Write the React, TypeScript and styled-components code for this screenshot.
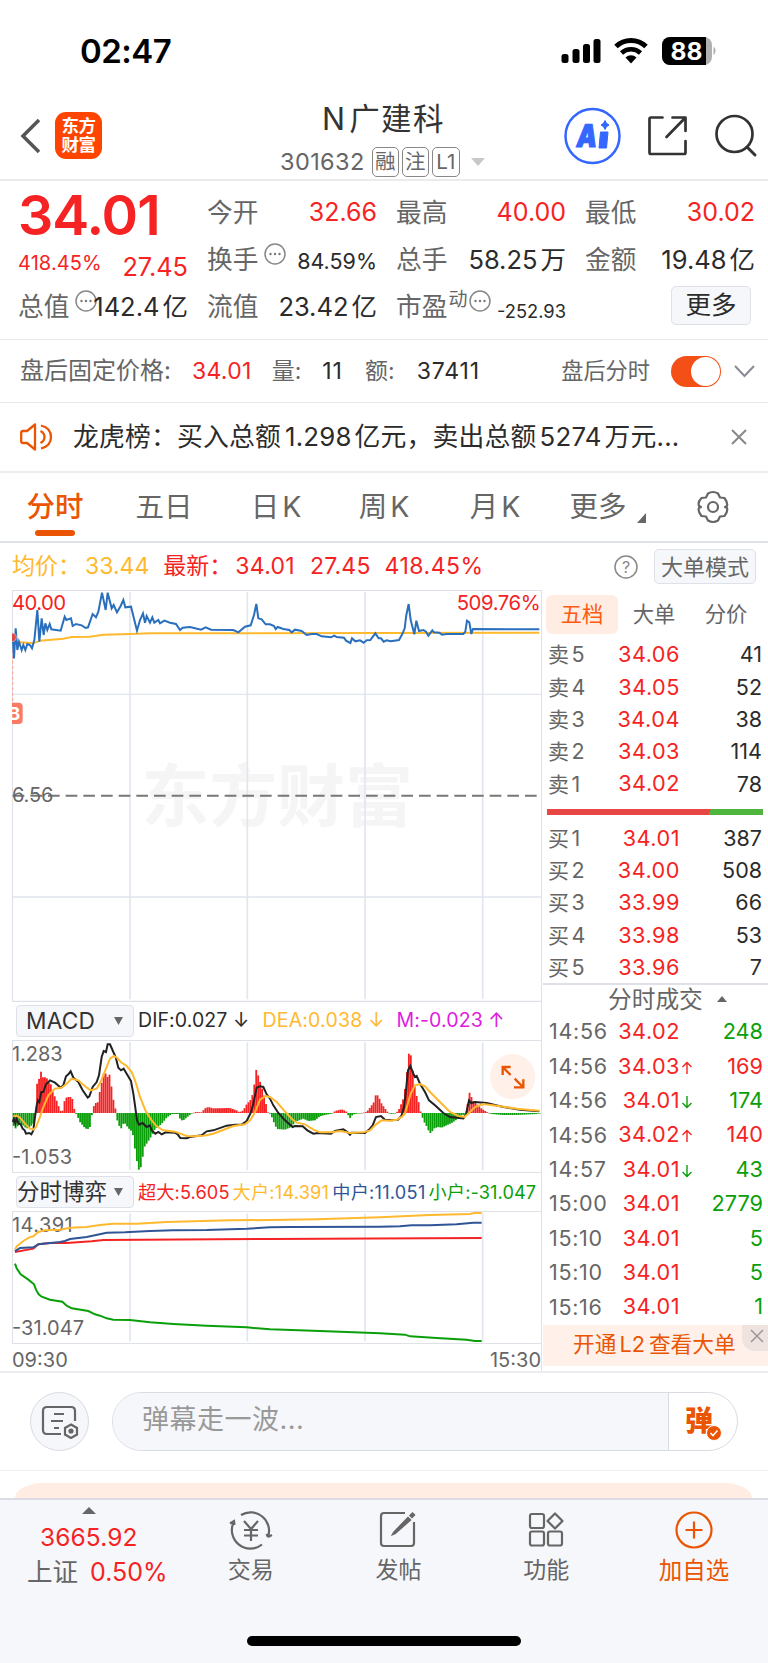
import React from "react";
import styled, { createGlobalStyle } from "styled-components";

const RED = "#f52323";
const GREEN = "#0a9f0a";
const GREY = "#666666";
const DARK = "#2b2b2b";
const ORANGE = "#ea5504";
const YELLOW = "#ffb92e";
const BLUE = "#2f5597";

const GlobalStyle = createGlobalStyle`
  * { box-sizing: border-box; }
  body { margin: 0; background: #fff; }
`;

interface TextProps {
  $s?: number;
  $c?: string;
  $ls?: number;
  $ml?: number;
  $dy?: number;
  $wt?: number;
}

const Text = styled.span<TextProps>`
  flex: none;
  white-space: nowrap;
  font-size: ${(p) => p.$s ?? 24}px;
  color: ${(p) => p.$c ?? GREY};
  letter-spacing: ${(p) => p.$ls ?? 0}px;
  margin-left: ${(p) => p.$ml ?? 0}px;
  margin-top: ${(p) => (p.$dy ?? 0) * 2}px;
  font-weight: ${(p) => p.$wt ?? 400};
  line-height: 1;
`;

const Gap = styled.span<{ $w: number }>`
  display: inline-block;
  flex: none;
  width: ${(p) => p.$w}px;
`;

const Screen = styled.div`
  width: 768px;
  height: 1663px;
  overflow: hidden;
  display: flex;
  flex-direction: column;
  background: #fff;
  font-family: Inter, "Noto Sans CJK SC", sans-serif;
`;

const StatusBar = styled.div`
  height: 88px;
  padding: 15px 51px 0 80px;
  display: flex;
  align-items: center;
`;

const StatusIcons = styled.svg`
  margin-left: auto;
`;

const Header = styled.header`
  height: 93px;
  display: flex;
  border-bottom: 2px solid #ebebee;
`;

const HeaderSide = styled.div<{ $w: number }>`
  width: ${(p) => p.$w}px;
  display: flex;
`;

const Logo = styled.div`
  width: 47px;
  height: 47px;
  margin: 24px 0 0 13px;
  border-radius: 11px;
  background: #ff4400;
  color: #fff;
  font-size: 17.5px;
  font-weight: 700;
  line-height: 19px;
  padding-top: 4px;
  text-align: center;
  letter-spacing: -0.5px;
`;

const Heading = styled.div`
  width: 288px;
  display: flex;
  flex-direction: column;
`;

const TitleLine = styled.div`
  height: 36px;
  margin-top: 13px;
  display: flex;
  align-items: center;
  padding-left: 80px;
`;

const CodeLine = styled.div`
  height: 30px;
  margin-top: 10px;
  display: flex;
  align-items: center;
  padding-left: 38px;
`;

const Badge = styled.span<{ $w: number }>`
  flex: none;
  width: ${(p) => p.$w}px;
  height: 30px;
  margin-right: 3px;
  border: 1.5px solid #888;
  border-radius: 5px;
  color: ${GREY};
  font-size: 20.5px;
  line-height: 27px;
  text-align: center;
`;

const Quote = styled.section`
  height: 159px;
  padding: 8px 12px 0 18px;
  display: grid;
  grid-template-columns: repeat(4, 170px);
  grid-template-rows: repeat(3, 47px);
  column-gap: 19px;
  border-bottom: 1px solid #e8e8eb;
`;

const Cell = styled.div`
  display: flex;
  align-items: center;
`;

const Push = styled.div`
  flex: 1;
`;

const MoreButton = styled.button<{ $w: number; $h: number }>`
  flex: none;
  width: ${(p) => p.$w}px;
  height: ${(p) => p.$h}px;
  padding: 0;
  border: 1.5px solid #dfe1e8;
  border-radius: 5px;
  background: #f6f7fa;
  display: flex;
  align-items: center;
  justify-content: center;
  font-family: inherit;
`;

const QuoteMore = styled(MoreButton)`
  margin: -3px 4px 0 0;
`;

const BigOrderMode = styled(MoreButton)`
  margin: 0 12px 0 16px;
`;

const Strip = styled.div<{ $h: number; $line?: string; $pl?: number }>`
  flex: none;
  height: ${(p) => p.$h}px;
  padding-left: ${(p) => p.$pl ?? 20}px;
  display: flex;
  align-items: center;
  border-bottom: ${(p) => p.$line ?? "1px solid #e8e8eb"};
`;

const Toggle = styled.div`
  width: 50px;
  height: 31px;
  margin-left: 21px;
  border-radius: 16px;
  background: #f44f17;
  padding: 1px;
  display: flex;
  justify-content: flex-end;
`;

const Knob = styled.div`
  width: 29px;
  height: 29px;
  border-radius: 50%;
  background: #fff;
`;

const Tab = styled.div<{ $ml: number; $w: number; $on?: boolean }>`
  width: ${(p) => p.$w}px;
  height: 68px;
  margin-left: ${(p) => p.$ml}px;
  display: flex;
  flex-direction: column;
  align-items: center;
  padding-top: 19px;
  gap: 9px;
  font-size: 28.5px;
  line-height: 29px;
  white-space: nowrap;
  color: ${(p) => (p.$on ? ORANGE : GREY)};
  font-weight: ${(p) => (p.$on ? 500 : 400)};
`;

const Underline = styled.div`
  width: 40px;
  height: 6px;
  border-radius: 3px;
  background: ${ORANGE};
`;

const Corner = styled.svg`
  margin: 22px 0 0 9px;
`;

const Gear = styled.svg`
  margin-left: 49px;
`;

const Main = styled.div`
  flex: none;
  height: 783px;
  display: flex;
  border-bottom: 2px solid #ebecf0;
`;

const Charts = styled.div`
  flex: none;
  width: 542px;
  padding-left: 12px;
  border-right: 1px solid #dfe1e9;
  display: flex;
  flex-direction: column;
`;

const Plot = styled.svg`
  display: block;
  flex: none;
  font-family: Inter, "Noto Sans CJK SC", sans-serif;
`;

const IndicatorBar = styled.div`
  flex: none;
  height: 38px;
  padding-left: 4px;
  display: flex;
  align-items: center;
`;

const Select = styled.div<{ $pl: number }>`
  flex: none;
  width: 118px;
  height: 32px;
  padding: 0 10px 0 ${(p) => p.$pl}px;
  border: 1.5px solid #dfe1e8;
  border-radius: 4px;
  background: #f6f7fa;
  display: flex;
  align-items: center;
  justify-content: space-between;
`;

const TimeAxis = styled.div`
  flex: none;
  height: 27px;
  padding-top: 4px;
  display: flex;
  align-items: center;
  justify-content: space-between;
`;

const Book = styled.aside`
  flex: 1;
  padding-left: 1px;
  display: flex;
  flex-direction: column;
`;

const BookTabs = styled.div`
  height: 39px;
  margin: 5px 0 5px 3px;
  display: flex;
  align-items: center;
`;

const BookTab = styled.div<{ $on?: boolean }>`
  width: 72px;
  height: 39px;
  border-radius: 6px;
  background: ${(p) => (p.$on ? "#ffede4" : "transparent")};
  display: flex;
  align-items: center;
  justify-content: center;
`;

const BookRow = styled.div<{ $h: number; $r: number }>`
  height: ${(p) => p.$h}px;
  display: grid;
  grid-template-columns: 61px 71px 1fr;
  align-items: center;
  padding: 0 ${(p) => p.$r}px 0 5px;
`;

const RightText = styled(Text)`
  text-align: right;
`;

const PriceText = styled(Text)`
  text-align: right;
  position: relative;
`;

const Arrow = styled.svg`
  position: absolute;
  left: 100%;
  top: 5px;
  margin-left: 1px;
`;

const Balance = styled.div`
  height: 6px;
  margin: 9px 5px 7px 4px;
  background: linear-gradient(115deg, #e84545 0 75%, #4fb53d 75%);
`;

const TradeHeader = styled.div`
  height: 32px;
  margin-top: -1px;
  padding: 0 0 1px 65px;
  border-top: 2px solid #dfe1e9;
  display: flex;
  align-items: center;
`;

const Promo = styled.div`
  height: 41px;
  margin-top: 1px;
  background: #fff0e9;
  display: flex;
  justify-content: space-between;
  padding-left: 30px;
`;

const PromoText = styled(Text)`
  line-height: 39px;
`;

const PromoClose = styled.div`
  width: 26px;
  height: 26px;
  border-bottom-left-radius: 13px;
  background: #eee3df;
  padding: 3px 0 0 7px;
`;

const Compose = styled.div`
  flex: none;
  height: 98px;
  padding: 0 30px;
  display: flex;
  align-items: center;
  border-bottom: 1px solid #eeeff2;
`;

const RoundButton = styled.div`
  width: 59px;
  height: 59px;
  border: 1px solid #d9dbe2;
  border-radius: 50%;
  background: #f6f7fa;
  display: flex;
  align-items: center;
  justify-content: center;
`;

const Field = styled.div`
  width: 626px;
  height: 59px;
  margin-left: 23px;
  border: 1px solid #d9dbe2;
  border-radius: 30px;
  overflow: hidden;
  display: flex;
`;

const Placeholder = styled.div`
  width: 556px;
  padding-left: 29px;
  background: #f6f7fa;
  border-right: 1px solid #d9dbe2;
  display: flex;
  align-items: center;
`;

const DanmuButton = styled.div`
  flex: 1;
  position: relative;
  padding: 14px 0 0 16px;
`;

const DanmuCheck = styled.svg`
  position: absolute;
  left: 37px;
  top: 32px;
`;

const CardTop = styled.div`
  flex: none;
  height: 15px;
  margin: 12px 16px 0 15px;
  border-radius: 28px 28px 0 0 / 15px 15px 0 0;
  background: #ffede4;
`;

const BottomNav = styled.nav`
  flex: 1;
  border-top: 2px solid #dcdde2;
  background: #f6f7fa;
  display: flex;
  flex-direction: column;
`;

const NavItems = styled.div`
  height: 136px;
  display: flex;
`;

const IndexItem = styled.div`
  width: 177px;
  height: 90px;
  padding: 7px 0 0 27px;
  display: flex;
  flex-direction: column;
`;

const IndexLine = styled.div<{ $h: number; $ml?: number }>`
  height: ${(p) => p.$h}px;
  margin-left: ${(p) => p.$ml ?? 0}px;
  display: flex;
  align-items: center;
`;

const NavItem = styled.div`
  width: 148px;
  padding-top: 8px;
  display: flex;
  flex-direction: column;
  align-items: center;
  gap: 7px;
`;

const HomeBar = styled.div`
  width: 274px;
  height: 10px;
  margin-left: 247px;
  border-radius: 5px;
  background: #000;
`;

const More = styled.svg<{ $ml: number }>`
  flex: none;
  margin: -11px -30px 0 ${(p) => p.$ml}px;
`;

const Ellipsis = ({ ml }: { ml: number }) => (
  <More $ml={ml} width="22" height="22" viewBox="0 0 22 22">
    <circle cx="11" cy="11" r="10" fill="#fff" stroke="#888" strokeWidth="1.5" />
    <circle cx="6.5" cy="11" r="1.2" fill="#777" />
    <circle cx="11" cy="11" r="1.2" fill="#777" />
    <circle cx="15.5" cy="11" r="1.2" fill="#777" />
  </More>
);

const TriangleSvg = styled.svg<{ $ml: number }>`
  flex: none;
  margin-left: ${(p) => p.$ml}px;
`;

const Triangle = ({ w, h, up, c = GREY, ml = 0 }: { w: number; h: number; up?: boolean; c?: string; ml?: number }) => (
  <TriangleSvg $ml={ml} width={w} height={h}>
    <path d={up ? `M0 ${h}L${w / 2} 0L${w} ${h}Z` : `M0 0L${w / 2} ${h}L${w} 0Z`} fill={c} />
  </TriangleSvg>
);

const TrendArrow = ({ up }: { up?: boolean }) => (
  <Arrow width="12" height="14" viewBox="0 0 12 14">
    <path
      d={up ? "M6 13V1.5M1.5 6L6 1.5L10.500 6" : "M6 1V12.500M1.500 8L6 12.500L10.500 8"}
      fill="none"
      stroke={up ? RED : GREEN}
      strokeWidth="1.4"
    />
  </Arrow>
);

/* Series are plotted in thirds of a pixel; the second half of a session starts at x = 810. */
type Pt = [number, number];
const HALF = 810;
const parse = (s: string, dx = 0): Pt[] =>
  s
    .trim()
    .split(/\s+/)
    .map((p) => {
      const [x, y] = p.split(",").map(Number);
      return [x + dx, y] as Pt;
    });
const line = (a: string, b = ""): string =>
  [...parse(a), ...(b ? parse(b, HALF) : [])].map((p) => p.join(",")).join(" ");

const price = line(
  "38,170 42,235 47,145 52,210 57,185 65,210 70,195 76,210 82,192 90,195 96,205 103,180 112,90 118,185 125,115 131,165 136,130 142,150 149,132 154,148 182,152 194,110 199,120 213,115 218,138 228,132 245,136 257,144 264,142 278,102 288,112 295,95 306,38 317,90 323,38 335,85 341,75 351,97 362,78 370,60 376,82 393,80 411,152 420,120 429,100 435,128 440,108 450,128 457,112 463,128 475,120 480,130 493,122 510,128 528,132 540,150 548,143 570,141 603,149 617,142 633,149 700,150 715,157 735,140 752,136 762,105 769,72 775,115 785,118 797,133",
  "0,133 12,138 17,147 23,141 40,147 58,150 65,157 75,149 95,153 110,165 125,162 140,162 155,169 183,172 193,167 200,171 222,173 228,182 241,189 246,175 256,184 270,181 281,188 290,181 301,180 316,160 326,175 333,175 341,185 350,181 362,184 387,180 398,160 404,145 409,105 416,72 422,120 433,163 439,122 447,153 460,150 468,155 475,167 487,151 492,157 508,158 516,164 530,162 580,162 586,155 591,122 598,127 604,162 609,147 808,148"
);
const average = line("38,185 100,190 120,182 190,176 215,171 270,170 310,164 390,162 450,160 1618,158");
const dif = line(
  "38,395 42,385 46,400 50,385 56,400 62,402 68,415 74,420 78,430 88,428 94,432 100,420 105,380 110,345 114,330 118,335 124,305 130,305 138,282 150,270 165,277 182,292 190,285 198,258 205,252 212,243 220,262 235,275 248,300 263,322 268,318 278,290 290,275 297,255 305,200 311,182 318,185 323,162 330,162 340,185 347,200 355,232 363,240 371,235 380,250 393,272 400,310 405,345 411,390 417,403 428,398 440,410 450,405 455,420 466,430 475,425 485,432 497,426 525,427 533,432 541,443 560,444 570,440 605,435 620,423 640,420 680,406 705,403 725,403 740,392 752,368 760,340 770,292 780,288 790,290 800,312",
  "0,325 10,345 25,368 45,390 68,410 75,407 98,408 112,420 130,430 145,428 183,430 195,422 220,417 232,425 240,433 245,427 285,428 300,415 308,405 318,380 333,377 345,388 365,390 385,388 395,375 402,350 408,300 414,240 421,227 430,250 435,260 440,257 450,280 465,305 477,330 495,345 520,368 540,380 580,384 588,372 597,330 604,338 615,335 650,338 700,350 750,358 808,363"
);
const dea = line(
  "40,378 50,376 60,382 75,400 90,415 100,418 108,410 118,385 130,350 145,315 165,295 185,292 200,280 215,265 235,270 255,288 272,300 290,295 302,275 318,235 330,205 342,197 352,203 362,215 380,227 395,245 405,270 420,320 437,362 455,390 470,408 490,420 525,424 560,437 580,438 610,436 640,430 700,407 735,402 752,388 765,365 780,328 797,317",
  "0,320 20,335 40,358 65,385 80,397 105,402 130,418 150,426 185,426 210,422 240,428 280,426 300,420 318,402 335,390 360,391 380,388 395,380 405,370 412,345 422,310 435,285 450,281 465,288 480,305 510,335 540,365 565,377 583,380 597,368 615,350 640,341 680,346 740,355 808,361"
);
const histogram: Pt[] = [
  ...parse(
    "38,395 44,418 50,410 60,402 70,405 80,415 90,410 100,400 104,380 108,368 110,300 114,245 118,270 124,240 130,265 138,258 146,275 152,280 160,310 168,325 175,345 182,362 186,368 190,352 195,325 202,320 216,320 222,352 226,368 230,372 240,395 252,410 262,418 270,410 274,380 278,368 283,340 295,335 300,300 307,270 314,235 320,265 328,250 333,275 338,320 345,345 348,368 352,390 362,418 370,400 376,400 384,412 392,420 398,425 402,460 408,490 414,538 421,538 427,510 432,472 440,460 450,445 458,430 466,415 480,405 490,395 500,382 515,371 535,371 542,390 550,390 562,380 575,370 580,368 585,365 605,366 615,354 625,350 640,354 690,353 710,360 718,366 730,360 740,342 755,325 762,290 769,238 777,262 785,290 795,325 800,350 804,366"
  ),
  ...parse(
    "0,370 8,385 15,405 22,416 45,418 65,410 75,395 100,385 115,392 135,390 150,378 165,374 187,370 190,368 195,362 215,357 228,362 231,368 235,375 242,385 248,372 262,370 275,368 290,365 300,352 312,335 317,315 325,315 332,335 342,350 352,364 358,368 365,371 375,369 385,362 392,345 400,325 406,290 412,235 418,178 424,200 430,255 437,310 444,325 449,350 453,368 457,380 465,400 473,412 478,428 485,428 490,415 505,410 515,412 530,405 545,398 560,388 575,375 588,372 592,345 597,320 600,298 605,322 612,335 625,345 635,355 650,365 658,368 665,371 700,374 740,374 800,371 812,368",
    HALF
  ),
];
const ZERO = 368;
const bars = (() => {
  const out: { x: number; y: number }[] = [];
  let i = 0;
  for (let x = 41; x < 1622; x += 5.87) {
    while (i < histogram.length - 2 && histogram[i + 1][0] < x) i++;
    const [x0, y0] = histogram[i];
    const [x1, y1] = histogram[i + 1];
    out.push({ x, y: y0 + ((y1 - y0) * (x - x0)) / (x1 - x0) });
  }
  return out;
})();

const V = [390, 742, 1095, 1448];

const Grid = ({ top, bottom }: { top: number; bottom: number }) => (
  <g stroke="#e1e6ee" strokeWidth="5">
    {V.map((x) => (
      <path key={x} d={`M${x} ${top}V${bottom}`} />
    ))}
  </g>
);

const Frame = ({ top, bottom }: { top: number; bottom: number }) => (
  <path d={`M1626 ${top}H37.500V${bottom}H1626`} fill="none" stroke="#dfe1e9" strokeWidth="3.500" />
);

const PriceChart = () => (
  <Plot width="530" height="412" viewBox="36 30 1590 1236">
    <text x="424" y="722" fontSize="204" fontWeight="700" fill="#f5f5f6" textLength="815">东方财富</text>
    <Grid top={36} bottom={1258} />
    <path d="M36 343H1626M36 951H1626" stroke="#e1e6ee" strokeWidth="4" />
    <Frame top={31.5} bottom={1264} />
    <path d="M38 647H1616" stroke="#777" strokeWidth="6" strokeDasharray="35 18" />
    <text x="36" y="91" fontSize="61" fill={RED} textLength="162">40.00</text>
    <text x="1370" y="91" fontSize="61" fill={RED} textLength="252">509.76%</text>
    <text x="36" y="667" fontSize="60" fill={GREY} textLength="124">6.56</text>
    <path d="M38 210V370" stroke="#ff9a90" strokeWidth="3" strokeDasharray="9 7" />
    <path d="M36 368H56A12 12 0 0 1 68 380V420A12 12 0 0 1 56 432H36Z" fill="#fb7a66" />
    <text x="25" y="419" fontSize="54" fontWeight="700" fill="#fff">B</text>
    <polyline points={average} fill="none" stroke={YELLOW} strokeWidth="6" />
    <polyline points={price} fill="none" stroke="#2a6fbd" strokeWidth="6" />
    <circle cx="36" cy="172" r="13" fill="#e04848" stroke="#f3c9c9" strokeWidth="2" />
  </Plot>
);

const MacdChart = () => (
  <Plot width="530" height="133" viewBox="36 149 1590 399">
    <Grid top={156} bottom={540} />
    <Frame top={150.5} bottom={546.5} />
    {bars.map((b) => (
      <rect
        key={b.x}
        x={b.x - 2.9}
        y={Math.min(b.y, ZERO)}
        width="5.500"
        height={Math.max(Math.abs(b.y - ZERO), 1.5)}
        fill={b.y < ZERO ? RED : GREEN}
      />
    ))}
    <text x="36" y="213" fontSize="60" fill={GREY} textLength="152">1.283</text>
    <text x="36" y="521" fontSize="60" fill={GREY} textLength="180">-1.053</text>
    <polyline points={dif} fill="none" stroke="#222" strokeWidth="6" />
    <polyline points={dea} fill="none" stroke={YELLOW} strokeWidth="6" />
    <circle cx="1538" cy="259" r="68" fill="#fff0e9" />
    <path d="M1508 254V230H1532M1509 231L1532 254M1570 267V291H1542M1569 290L1544 265" fill="none" stroke={ORANGE} strokeWidth="7" />
  </Plot>
);

const GameChart = () => (
  <Plot width="530" height="133" viewBox="36 662 1590 399">
    <Grid top={669} bottom={1053} />
    <Frame top={663.5} bottom={1059.5} />
    <text x="36" y="726" fontSize="60" fill={GREY} textLength="182">14.391</text>
    <text x="36" y="1034" fontSize="60" fill={GREY} textLength="216">-31.047</text>
    <g fill="none" strokeWidth="6">
      <polyline
        stroke={YELLOW}
        points={line(
          "45,778 50,768 70,752 88,741 100,738 115,725 135,720 180,718 210,712 260,710 300,704 340,700 410,700 500,695 690,690 810,689",
          "140,687 330,681 480,674 600,671 612,668 635,668"
        )}
      />
      <polyline stroke={RED} points={line("45,785 100,775 115,762 150,758 200,758 275,753 310,749 810,746", "635,743")} />
      <polyline
        stroke={BLUE}
        points={line(
          "45,783 60,773 100,771 115,762 180,755 195,752 210,746 260,740 320,727 375,726 450,722 520,720 620,719 740,715 810,711",
          "60,710 330,709 390,708 425,705 480,705 560,702 610,697 635,697"
        )}
      />
      <polyline
        stroke={GREEN}
        points={line(
          "45,820 50,834 62,852 85,868 102,882 108,898 116,912 125,919 150,928 187,934 200,946 215,954 265,962 285,972 300,976 320,984 340,988 390,989 450,996 520,1001 620,1006 740,1011 810,1017",
          "150,1022 330,1029 405,1033 420,1038 500,1043 590,1048 615,1052 635,1052"
        )}
      />
    </g>
  </Plot>
);

const sells = [["卖5", "34.06", "41"], ["卖4", "34.05", "52"], ["卖3", "34.04", "38"], ["卖2", "34.03", "114"], ["卖1", "34.02", "78"]];
const buys = [["买1", "34.01", "387"], ["买2", "34.00", "508"], ["买3", "33.99", "66"], ["买4", "33.98", "53"], ["买5", "33.96", "7"]];
const trades: [string, string, string, string, string][] = [
  ["14:56", "34.02", "", "248", GREEN],
  ["14:56", "34.03", "up", "169", RED],
  ["14:56", "34.01", "down", "174", GREEN],
  ["14:56", "34.02", "up", "140", RED],
  ["14:57", "34.01", "down", "43", GREEN],
  ["15:00", "34.01", "", "2779", GREEN],
  ["15:10", "34.01", "", "5", GREEN],
  ["15:10", "34.01", "", "5", GREEN],
  ["15:16", "34.01", "", "1", GREEN],
];

const OrderRow = ({ row }: { row: string[] }) => (
  <BookRow $h={32.3} $r={6}>
    <Text $s={21} $ls={0.5}>
      {row[0][0]}
      <Text $s={21.5} $ml={2}>{row[0][1]}</Text>
    </Text>
    <RightText as="div" $s={21.7} $c={RED} $ls={0.5}>{row[1]}</RightText>
    <RightText as="div" $s={21.5} $c={DARK}>{row[2]}</RightText>
  </BookRow>
);

const Amount = ({ n, unit }: { n: string; unit: string }) => (
  <Text $s={25.5} $c={DARK}>
    {n}
    <Gap $w={3} />
    {unit}
  </Text>
);

export default function App() {
  return (
    <Screen>
      <GlobalStyle />
      <StatusBar>
        <Text $s={33} $c="#000" $wt={600} $ls={-0.5}>02:47</Text>
        <StatusIcons width="156" height="30" viewBox="0 0 156 30">
          <rect x="0.500" y="17" width="7" height="9" rx="2.5" />
          <rect x="11.500" y="12" width="7" height="14" rx="2.5" />
          <rect x="22" y="7" width="7" height="19" rx="2.500" />
          <rect x="32.500" y="2" width="7" height="24" rx="2.500" />
          <path d="M55 9.500A21.500 21.500 0 0 1 85 9.500" fill="none" stroke="#000" strokeWidth="5" />
          <path d="M60.500 16A14 14 0 0 1 79.500 16" fill="none" stroke="#000" strokeWidth="4.600" />
          <path d="M70 26.500L64.500 20.500A8 8 0 0 1 75.500 20.500Z" />
          <rect x="101" y="0" width="50" height="28" rx="8" fill="#b0b0b0" />
          <path d="M109 0H145V28H109A8 8 0 0 1 101 20V8A8 8 0 0 1 109 0Z" />
          <path d="M152.500 9.500A6 6 0 0 1 152.500 18.500Z" fill="#b0b0b0" />
          <text x="125.500" y="22.700" fontSize="24.500" fontWeight="700" fill="#fff" textAnchor="middle">88</text>
        </StatusIcons>
      </StatusBar>

      <Header>
        <HeaderSide $w={242}>
          <svg width="42" height="88">
            <path d="M39 32L23 48L39 64" fill="none" stroke="#555" strokeWidth="3.500" />
          </svg>
          <Logo>东方<br />财富</Logo>
        </HeaderSide>
        <Heading>
          <TitleLine>
            <Text $s={30.5} $c="#333" $ls={1.3}>N<Gap $w={3} />广建科</Text>
          </TitleLine>
          <CodeLine>
            <Text $s={23.5} $ls={0.4}>301632</Text>
            <Gap $w={7} />
            <Badge $w={27}>融</Badge>
            <Badge $w={27}>注</Badge>
            <Badge $w={28}>L1</Badge>
            <Triangle w={14} h={8} c="#c8c8c8" ml={8} />
          </CodeLine>
        </Heading>
        <HeaderSide $w={238}>
          <svg width="238" height="88" viewBox="530 88 238 88" fill="none">
            <circle cx="592.5" cy="136" r="27" stroke="#3467ff" strokeWidth="2.500" />
            <text x="0" y="0" transform="translate(575.500 146.500) skewX(-8) scale(.82 1)" fontSize="31" fontWeight="900" fill="#3467ff" stroke="#3467ff" strokeWidth="1.200">A</text>
            <path d="M600.500 132H608L606.500 148H599Z" fill="#3467ff" stroke="#3467ff" strokeLinejoin="round" />
            <path d="M605 120.500Q606 124 609 125Q606 126 605 129.500Q604 126 601 125Q604 124 605 120.500Z" fill="#3467ff" stroke="#3467ff" />
            <g stroke="#333" strokeWidth="2.700" strokeLinecap="round" strokeLinejoin="round">
              <path d="M662.500 117.500H651Q649.500 117.500 649.500 119V152.500Q649.500 154 651 154H684Q685.500 154 685.500 152.500V141M672.500 117.500H685.500V131M685 118L666.500 137" />
              <circle cx="734.500" cy="134" r="18" />
              <path d="M747 147L755 155" strokeWidth="3" />
            </g>
          </svg>
        </HeaderSide>
      </Header>

      <Quote>
        <Cell><Text $s={55.5} $c={RED} $wt={600} $ls={-1} $dy={2}>34.01</Text></Cell>
        <Cell><Text $s={25.7}>今开</Text><Push /><Text $s={25} $c={RED}>32.66</Text></Cell>
        <Cell><Text $s={25.7}>最高</Text><Push /><Text $s={25} $c={RED}>40.00</Text></Cell>
        <Cell><Text $s={25.7}>最低</Text><Push /><Text $s={25} $c={RED}>30.02</Text></Cell>

        <Cell><Text $s={20} $c={RED} $ls={0.1} $dy={3}>418.45%</Text><Push /><Text $s={25.3} $c={RED} $dy={7}>27.45</Text></Cell>
        <Cell><Text $s={25.7}>换手</Text><Ellipsis ml={6} /><Push /><Text $s={21.5} $c={DARK} $dy={2}>84.59%</Text></Cell>
        <Cell><Text $s={25.7}>总手</Text><Push /><Amount n="58.25" unit="万" /></Cell>
        <Cell><Text $s={25.7}>金额</Text><Push /><Amount n="19.48" unit="亿" /></Cell>

        <Cell><Text $s={25.7}>总值</Text><Ellipsis ml={6} /><Push /><Amount n="142.4" unit="亿" /></Cell>
        <Cell><Text $s={25.7}>流值</Text><Push /><Amount n="23.42" unit="亿" /></Cell>
        <Cell><Text $s={25.7}>市盈</Text><Text $s={19} $ml={1} $dy={-7}>动</Text><Ellipsis ml={2} /><Push /><Text $s={18.3} $c={DARK} $dy={5}>-252.93</Text></Cell>
        <Cell><Push /><QuoteMore $w={80} $h={39}><Text $s={25.5} $c={DARK}>更多</Text></QuoteMore></Cell>
      </Quote>

      <Strip $h={63}>
        <Text $s={24}>盘后固定价格:</Text>
        <Text $s={23} $c={RED} $ml={21} $ls={0.3}>34.01</Text>
        <Text $s={23} $ml={20}>量:</Text>
        <Text $s={23} $c={DARK} $ml={21} $ls={1}>11</Text>
        <Text $s={23} $ml={22}>额:</Text>
        <Text $s={23} $c={DARK} $ml={22} $ls={0.9}>37411</Text>
        <Push />
        <Text $s={22.2}>盘后分时</Text>
        <Toggle><Knob /></Toggle>
        <svg width="47" height="14"><path d="M14 2L23.500 12L33 2" fill="none" stroke="#8a8a94" strokeWidth="2" /></svg>
      </Strip>

      <Strip $h={70} $line="2px solid #ececef">
        <svg width="34" height="30" fill="none" stroke={ORANGE} strokeWidth="2.300">
          <path d="M3 9Q1.200 9 1.200 11V19Q1.200 21 3 21H7L15 27.500V2.500L7 9Z" strokeLinejoin="round" />
          <path d="M20.500 9Q24.500 11 24.500 15T20.500 21M21 3.500Q31 6 31 15T21 26.500" />
        </svg>
        <Text $s={25.8} $c={DARK} $ml={19} $ls={0.2}>
          龙虎榜：买入总额<Gap $w={4} />1.298<Gap $w={3} />亿元，卖出总额<Gap $w={3} />5274<Gap $w={3} />万元...
        </Text>
        <Push />
        <svg width="38" height="18"><path d="M2 2L16 16M16 2L2 16" stroke="#888" strokeWidth="2" /></svg>
      </Strip>

      <Strip $h={70} $pl={0} $line="2px solid #dfe1ea">
        <Tab $ml={25} $w={60} $on>分时<Underline /></Tab>
        <Tab $ml={50} $w={58}>五日</Tab>
        <Tab $ml={56} $w={54}><span>日<Gap $w={3} />K</span></Tab>
        <Tab $ml={54} $w={54}><span>周<Gap $w={3} />K</span></Tab>
        <Tab $ml={57} $w={54}><span>月<Gap $w={3} />K</span></Tab>
        <Tab $ml={46} $w={60}>更多</Tab>
        <Corner width="10" height="10"><path d="M0 10L9 0V10Z" fill={GREY} /></Corner>
        <Gear width="34" height="34" viewBox="0 0 34 34" fill="none" stroke={GREY} strokeWidth="2.200">
          <path d="M12 3.500Q17 .5 22 3.500L24 7.500L28.500 8Q32 13 31 16L29 17L31 18Q32 22 28.500 26L24 26.500L22 30.500Q17 33.500 12 30.500L10 26.500L5.500 26Q1.500 21 3 18L5 17L3 16Q1.500 12 5.500 8L10 7.500Z" strokeLinejoin="round" />
          <circle cx="17" cy="17" r="5" />
        </Gear>
      </Strip>

      <Strip $h={47} $pl={12} $line="0">
        <Text $s={23} $c={YELLOW}>均价：</Text>
        <Text $s={23} $c={YELLOW} $ml={4}>33.44</Text>
        <Text $s={23} $c={RED} $ml={14}>最新：</Text>
        <Text $s={23} $c={RED} $ml={3} $ls={0.3}>34.01</Text>
        <Text $s={23} $c={RED} $ml={15} $ls={0.2}>27.45</Text>
        <Text $s={23} $c={RED} $ml={14} $ls={0.5}>418.45%</Text>
        <Push />
        <svg width="24" height="24"><circle cx="12" cy="12" r="11" fill="none" stroke="#888" strokeWidth="1.500" /><text x="12" y="18" fontSize="16" fill="#888" textAnchor="middle">?</text></svg>
        <BigOrderMode $w={102} $h={35}><Text $s={22}>大单模式</Text></BigOrderMode>
      </Strip>

      <Main>
        <Charts>
          <PriceChart />
          <IndicatorBar>
            <Select $pl={9}><Text $s={22.7} $c="#333" $ls={0.2}>MACD</Text><Triangle w={9} h={8} /></Select>
            <Text $s={19.5} $c={DARK} $ml={4} $ls={0.1}>DIF:0.027 ↓</Text>
            <Text $s={19.5} $c={YELLOW} $ml={13} $ls={0.2}>DEA:0.038 ↓</Text>
            <Text $s={19.5} $c="#e01be0" $ml={12} $ls={0.1}>M:-0.023 ↑</Text>
          </IndicatorBar>
          <MacdChart />
          <IndicatorBar>
            <Select $pl={0}><Text $s={22.5} $c="#333">分时博弈</Text><Triangle w={9} h={8} /></Select>
            <Text $s={18.2} $c={RED} $ml={4} $ls={0.1}>超大:5.605</Text>
            <Text $s={18.2} $c={YELLOW} $ml={3} $ls={0.2}>大户:14.391</Text>
            <Text $s={18.2} $c={BLUE} $ml={3} $ls={0.25}>中户:11.051</Text>
            <Text $s={18.2} $c={GREEN} $ml={3} $ls={0.1}>小户:-31.047</Text>
          </IndicatorBar>
          <GameChart />
          <TimeAxis><Text $s={20}>09:30</Text><Text $s={20}>15:30</Text></TimeAxis>
        </Charts>
        <Book>
          <BookTabs>
            <BookTab $on><Text $s={21.3} $c="#ff5a10">五档</Text></BookTab>
            <BookTab><Text $s={21.3}>大单</Text></BookTab>
            <BookTab><Text $s={21.3}>分价</Text></BookTab>
          </BookTabs>
          {sells.map((r) => <OrderRow key={r[0]} row={r} />)}
          <Balance />
          {buys.map((r) => <OrderRow key={r[0]} row={r} />)}
          <TradeHeader>
            <Text $s={23.7}>分时成交</Text>
            <Triangle w={10} h={6} up ml={14} />
          </TradeHeader>
          {trades.map(([t, p, dir, q, c], i) => (
            <BookRow key={i} $h={34.4} $r={5}>
              <Text $s={21.5} $ls={0.7} $ml={1}>{t}</Text>
              <PriceText as="div" $s={21.7} $c={RED} $ls={0.5}>{p}{dir && <TrendArrow up={dir === "up"} />}</PriceText>
              <RightText as="div" $s={21.7} $c={c}>{q}</RightText>
            </BookRow>
          ))}
          <Promo>
            <PromoText $s={21.7} $c={ORANGE}>开通<Gap $w={3} />L2<Gap $w={4} />查看大单</PromoText>
            <PromoClose><svg width="16" height="16"><path d="M2 2L14 14M14 2L2 14" stroke="#999" strokeWidth="1.500" /></svg></PromoClose>
          </Promo>
        </Book>
      </Main>

      <Compose>
        <RoundButton>
          <svg width="38" height="34" viewBox="0 0 38 34" fill="none" stroke={GREY} strokeWidth="2.200">
            <path d="M20 29H6Q2 29 2 25V6Q2 2 6 2H30Q34 2 34 6V16M13 9H23M10 16H22M13 23H18" />
            <path d="M30 19.500L36 23V29.500L30 33L24 29.500V23Z" />
            <circle cx="30" cy="26" r="1.500" fill={GREY} />
          </svg>
        </RoundButton>
        <Field>
          <Placeholder><Text $s={27} $c="#999" $ls={0.5} $dy={-2}>弹幕走一波...</Text></Placeholder>
          <DanmuButton>
            <Text as="div" $s={28} $c={ORANGE} $wt={900}>弹</Text>
            <DanmuCheck width="16" height="16"><circle cx="8" cy="8" r="7.500" fill={ORANGE} stroke="#fff" /><path d="M4.500 8L7 10.500L11.500 5.500" fill="none" stroke="#fff" strokeWidth="1.600" /></DanmuCheck>
          </DanmuButton>
        </Field>
      </Compose>
      <CardTop />

      <BottomNav>
        <NavItems>
          <IndexItem>
            <Triangle w={14} h={7} up ml={55} />
            <IndexLine $h={46} $ml={13}><Text $s={24.5} $c={RED} $ls={0.1}>3665.92</Text></IndexLine>
            <IndexLine $h={24}><Text $s={25.5}>上证</Text><Text $s={25} $c={RED} $ml={12}>0.50%</Text></IndexLine>
          </IndexItem>
          <NavItem>
            <svg width="44" height="44" viewBox="0 0 44 44" fill="none" stroke={GREY} strokeWidth="2.200">
              <path d="M12 7A18.500 18.500 0 0 1 39 29M39 29L43 27M39 29L37.500 26M33 36.500A18.500 18.500 0 0 1 5 13.500M1 15.500L5 13L5.500 17" />
              <path d="M15 13L22 21L29 13M22 21V33M15 22H29M15 27.500H29" />
            </svg>
            <Text $s={23}>交易</Text>
          </NavItem>
          <NavItem>
            <svg width="44" height="44" viewBox="0 0 44 44" fill="none" stroke={GREY} strokeWidth="2.200">
              <path d="M29 5H8Q5 5 5 8V35Q5 38 8 38H35Q38 38 38 35V14" />
              <path d="M18 24L32 9.500L34.500 12L19 25.500L16.500 26.500ZM34 7.500L36.500 5L38.500 7L36 9.500Z" fill={GREY} strokeWidth="1.500" />
            </svg>
            <Text $s={23}>发帖</Text>
          </NavItem>
          <NavItem>
            <svg width="44" height="44" viewBox="0 0 44 44" fill="none" stroke={GREY} strokeWidth="2.200">
              <rect x="6" y="6" width="14" height="14" rx="2" />
              <rect x="6" y="23.500" width="14" height="14" rx="2" />
              <rect x="24" y="23.500" width="14" height="14" rx="2" />
              <path d="M31 5.500L38.500 13L31 20.500L23.500 13Z" strokeLinejoin="round" />
            </svg>
            <Text $s={23}>功能</Text>
          </NavItem>
          <NavItem>
            <svg width="44" height="44" viewBox="0 0 44 44" fill="none" stroke={ORANGE} strokeWidth="2.200">
              <circle cx="22" cy="22" r="17.500" />
              <path d="M22 13.500V30.500M13.500 22H30.500" />
            </svg>
            <Text $s={23.5} $c={ORANGE}>加自选</Text>
          </NavItem>
        </NavItems>
        <HomeBar />
      </BottomNav>
    </Screen>
  );
}
